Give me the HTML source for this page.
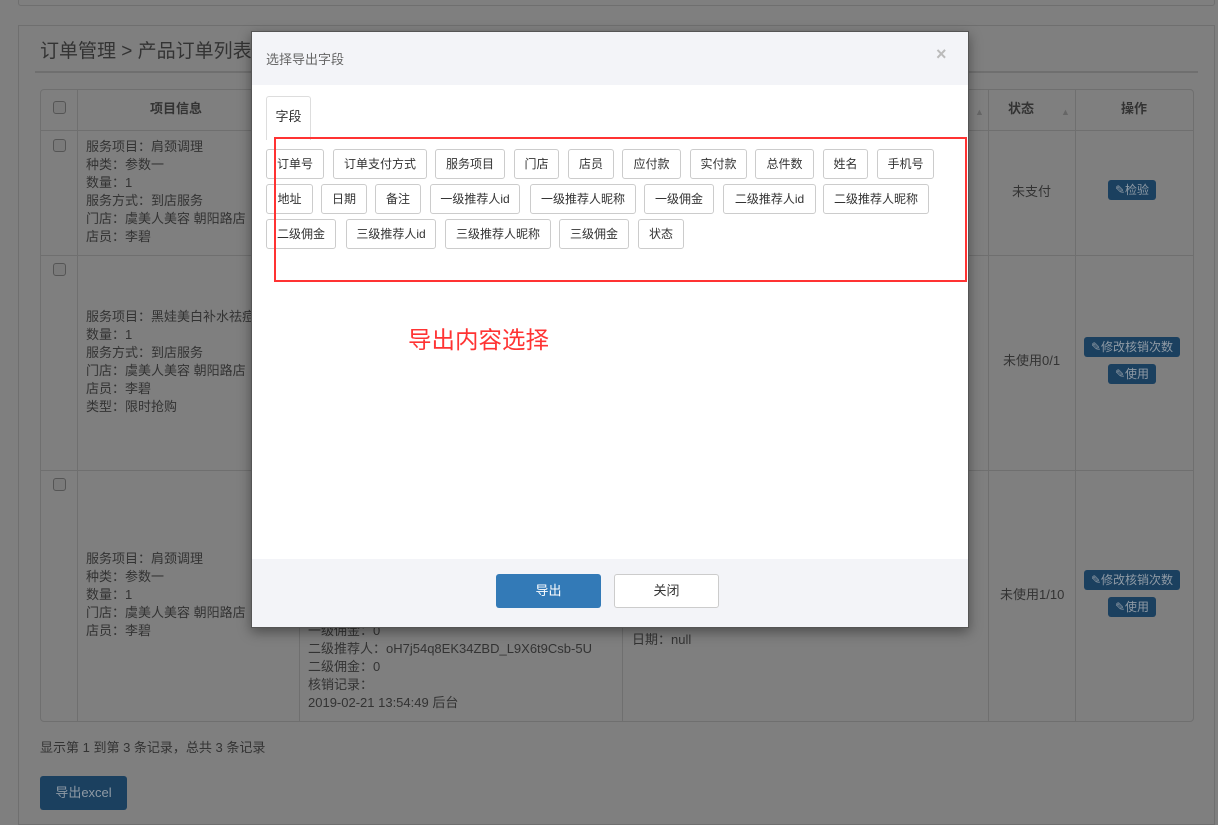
<!DOCTYPE html>
<html><head><meta charset="utf-8"><style>
*{box-sizing:border-box;margin:0;padding:0}
body{width:1218px;height:815px;overflow:hidden;background:#7f7f7f;font-family:"Liberation Sans","Noto Sans CJK SC",sans-serif;font-size:13px;color:#2e2e2e;position:relative}
.abs{position:absolute}
.line{position:absolute;background:#6f6f6f}
.cell{position:absolute;line-height:18px;font-size:13px;color:#333}
.cb{position:absolute;width:13px;height:13px;border:1px solid #555;border-radius:3px;background:#7a7a7a}
.btn{position:absolute;background:#1b405f;color:#8f9aa5;border-radius:3px;font-size:12px;height:20px;line-height:20px;text-align:center}
.tag{position:absolute;height:30px;line-height:28px;border:1px solid #ccc;border-radius:3px;background:#fff;font-size:12px;color:#333;text-align:center}
</style></head><body>
<div class="abs" style="left:18px;top:-2px;width:1197px;height:8px;border:1px solid #6f6f6f;border-radius:3px"></div>
<div class="abs" style="left:18px;top:25px;width:1197px;height:800px;border:1px solid #6f6f6f"></div>
<div class="abs" style="left:40px;top:36px;font-size:19px;color:#333">订单管理 &gt; 产品订单列表</div>
<div class="line" style="left:35px;top:71px;width:1163px;height:2px"></div>
<div class="abs" style="left:40px;top:89px;width:1154px;height:633px;border:1px solid #6f6f6f;border-radius:4px"></div>
<div class="line" style="left:40px;top:130px;width:1154px;height:1px"></div>
<div class="line" style="left:40px;top:255px;width:1154px;height:1px"></div>
<div class="line" style="left:40px;top:470px;width:1154px;height:1px"></div>
<div class="line" style="left:77px;top:89px;width:1px;height:633px"></div>
<div class="line" style="left:299px;top:89px;width:1px;height:633px"></div>
<div class="line" style="left:622px;top:89px;width:1px;height:633px"></div>
<div class="line" style="left:988px;top:89px;width:1px;height:633px"></div>
<div class="line" style="left:1075px;top:89px;width:1px;height:633px"></div>
<div class="cb" style="left:53px;top:101px"></div>
<div class="cb" style="left:53px;top:139px"></div>
<div class="cb" style="left:53px;top:263px"></div>
<div class="cb" style="left:53px;top:478px"></div>
<div class="cell" style="left:150px;top:100px;font-weight:bold">项目信息</div>
<div class="cell" style="left:1008px;top:100px;font-weight:bold">状态</div>
<div class="cell" style="left:1121px;top:100px;font-weight:bold">操作</div>
<div class="cell" style="left:975px;top:103px;color:#666;font-size:9px">▲<br></div>
<div class="cell" style="left:1061px;top:103px;color:#666;font-size:9px">▲</div>
<div class="cell" style="left:86px;top:138px">服务项目：肩颈调理<br>种类：参数一<br>数量：1<br>服务方式：到店服务<br>门店：虞美人美容 朝阳路店<br>店员：李碧</div>
<div class="cell" style="left:86px;top:308px">服务项目：黑娃美白补水祛痘<br>数量：1<br>服务方式：到店服务<br>门店：虞美人美容 朝阳路店<br>店员：李碧<br>类型：限时抢购</div>
<div class="cell" style="left:86px;top:550px">服务项目：肩颈调理<br>种类：参数一<br>数量：1<br>门店：虞美人美容 朝阳路店<br>店员：李碧</div>
<div class="cell" style="left:308px;top:622px">一级佣金：0<br>二级推荐人：oH7j54q8EK34ZBD_L9X6t9Csb-5U<br>二级佣金：0<br>核销记录：<br>2019-02-21 13:54:49 后台</div>
<div class="cell" style="left:632px;top:631px">日期：null</div>
<div class="cell" style="left:1012px;top:183px">未支付</div>
<div class="cell" style="left:1003px;top:352px">未使用0/1</div>
<div class="cell" style="left:1000px;top:586px">未使用1/10</div>
<div class="btn" style="left:1108px;top:180px;width:48px">✎检验</div>
<div class="btn" style="left:1084px;top:337px;width:96px">✎修改核销次数</div>
<div class="btn" style="left:1108px;top:364px;width:48px">✎使用</div>
<div class="btn" style="left:1084px;top:570px;width:96px">✎修改核销次数</div>
<div class="btn" style="left:1108px;top:597px;width:48px">✎使用</div>
<div class="cell" style="left:40px;top:739px">显示第 1 到第 3 条记录，总共 3 条记录</div>
<div class="btn" style="left:40px;top:776px;width:87px;height:34px;line-height:34px;font-size:13px">导出excel</div>
<div class="abs" style="left:251px;top:31px;width:718px;height:597px;background:#fff;border:1px solid #555;box-shadow:0 4px 12px rgba(0,0,0,.4)">
  <div class="abs" style="left:0;top:0;width:716px;height:53px;background:#f3f4f8"></div>
  <div class="abs" style="left:14px;top:17px;color:#666;font-size:13px">选择导出字段</div>
  <div class="abs" style="left:684px;top:12px;color:#bbb;font-size:18px;font-weight:bold">×</div>
  <div class="abs" style="left:14px;top:64px;width:45px;height:44px;border:1px solid #ddd;border-bottom:none;border-radius:3px 3px 0 0;line-height:40px;text-align:center;color:#333">字段</div>
  <div class="abs" style="left:0;top:527px;width:716px;height:68px;background:#f3f4f8"></div>
  <div class="abs" style="left:244px;top:542px;width:105px;height:34px;background:#337ab7;border-radius:3px;color:#fff;text-align:center;line-height:34px">导出</div>
  <div class="abs" style="left:362px;top:542px;width:105px;height:34px;background:#fff;border:1px solid #ccc;border-radius:3px;color:#333;text-align:center;line-height:32px">关闭</div>
</div>
<div class="tag" style="left:266px;top:149px;width:58px">订单号</div>
<div class="tag" style="left:333px;top:149px;width:94px">订单支付方式</div>
<div class="tag" style="left:435px;top:149px;width:70px">服务项目</div>
<div class="tag" style="left:514px;top:149px;width:45px">门店</div>
<div class="tag" style="left:568px;top:149px;width:46px">店员</div>
<div class="tag" style="left:622px;top:149px;width:59px">应付款</div>
<div class="tag" style="left:690px;top:149px;width:57px">实付款</div>
<div class="tag" style="left:755px;top:149px;width:59px">总件数</div>
<div class="tag" style="left:823px;top:149px;width:45px">姓名</div>
<div class="tag" style="left:877px;top:149px;width:57px">手机号</div>
<div class="tag" style="left:266px;top:184px;width:47px">地址</div>
<div class="tag" style="left:321px;top:184px;width:46px">日期</div>
<div class="tag" style="left:375px;top:184px;width:46px">备注</div>
<div class="tag" style="left:430px;top:184px;width:90px">一级推荐人id</div>
<div class="tag" style="left:530px;top:184px;width:106px">一级推荐人昵称</div>
<div class="tag" style="left:644px;top:184px;width:70px">一级佣金</div>
<div class="tag" style="left:723px;top:184px;width:93px">二级推荐人id</div>
<div class="tag" style="left:823px;top:184px;width:106px">二级推荐人昵称</div>
<div class="tag" style="left:266px;top:219px;width:70px">二级佣金</div>
<div class="tag" style="left:346px;top:219px;width:90px">三级推荐人id</div>
<div class="tag" style="left:445px;top:219px;width:106px">三级推荐人昵称</div>
<div class="tag" style="left:559px;top:219px;width:70px">三级佣金</div>
<div class="tag" style="left:638px;top:219px;width:46px">状态</div>
<div class="abs" style="left:274px;top:137px;width:693px;height:145px;border:2px solid #f33"></div>
<div class="abs" style="left:408px;top:321px;font-size:23.5px;color:#f33">导出内容选择</div>
</body></html>
